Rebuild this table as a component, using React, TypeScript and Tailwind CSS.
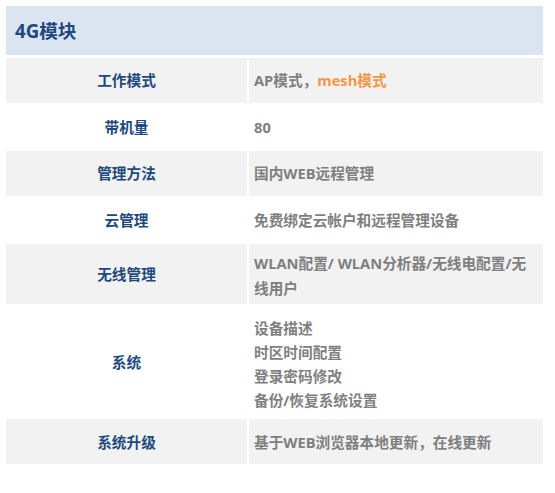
import * as React from "react";

type Row = {
  label: string;
  h: string;
  value: React.ReactNode;
  valueClass?: string;
  gray: boolean;
};

const rows: Row[] = [
  {
    label: "工作模式",
    h: "h-[44.5px]",
    gray: true,
    value: (
      <span>
        AP模式，<span className="text-[#f79646]">mesh模式</span>
      </span>
    ),
  },
  { label: "带机量", h: "h-[44.5px]", gray: false, value: "80" },
  { label: "管理方法", h: "h-[44.5px]", gray: true, value: "国内WEB远程管理" },
  { label: "云管理", h: "h-[44.5px]", gray: false, value: "免费绑定云帐户和远程管理设备" },
  {
    label: "无线管理",
    h: "h-[60px]",
    gray: true,
    valueClass: "leading-[25px] pt-[3px] whitespace-nowrap",
    value: (
      <>
        WLAN配置/ WLAN分析器/无线电配置/无
        <br />
        线用户
      </>
    ),
  },
  {
    label: "系统",
    h: "h-[111px]",
    gray: false,
    valueClass: "leading-[24.2px] pt-[5px]",
    value: (
      <>
        <div>设备描述</div>
        <div>时区时间配置</div>
        <div>登录密码修改</div>
        <div>备份/恢复系统设置</div>
      </>
    ),
  },
  { label: "系统升级", h: "h-[45px]", gray: true, value: "基于WEB浏览器本地更新，在线更新" },
];

export default function App() {
  return (
    <div
      className="w-[555px] h-[493px] bg-white pt-[6px] pl-[6px]"
      style={{ fontFamily: '"Open Sans", "Noto Sans CJK SC", sans-serif' }}
    >
      <div className="w-[537px] flex flex-col">
        <div className="h-[49px] bg-[#dbe5f1] flex items-center pl-[9px] text-[18.67px] font-bold text-[#1f497d]">
          4G模块
        </div>
        <div className="mt-[3px] flex flex-col gap-[2px]">
          {rows.map((r) => (
            <div key={r.label} className={`grid grid-cols-[241px_294px] gap-x-[2px] ${r.h}`}>
              <div
                className={`flex items-center justify-center text-[14.67px] font-bold text-[#1f497d] ${
                  r.gray ? "bg-[#f2f2f2]" : "bg-white"
                }`}
              >
                {r.label}
              </div>
              <div
                className={`flex flex-col justify-center pl-[5px] text-[14.67px] font-bold text-[#7f7f7f] ${
                  r.gray ? "bg-[#f2f2f2]" : "bg-white"
                } ${r.valueClass ?? ""}`}
              >
                <div>{r.value}</div>
              </div>
            </div>
          ))}
        </div>
      </div>
    </div>
  );
}
